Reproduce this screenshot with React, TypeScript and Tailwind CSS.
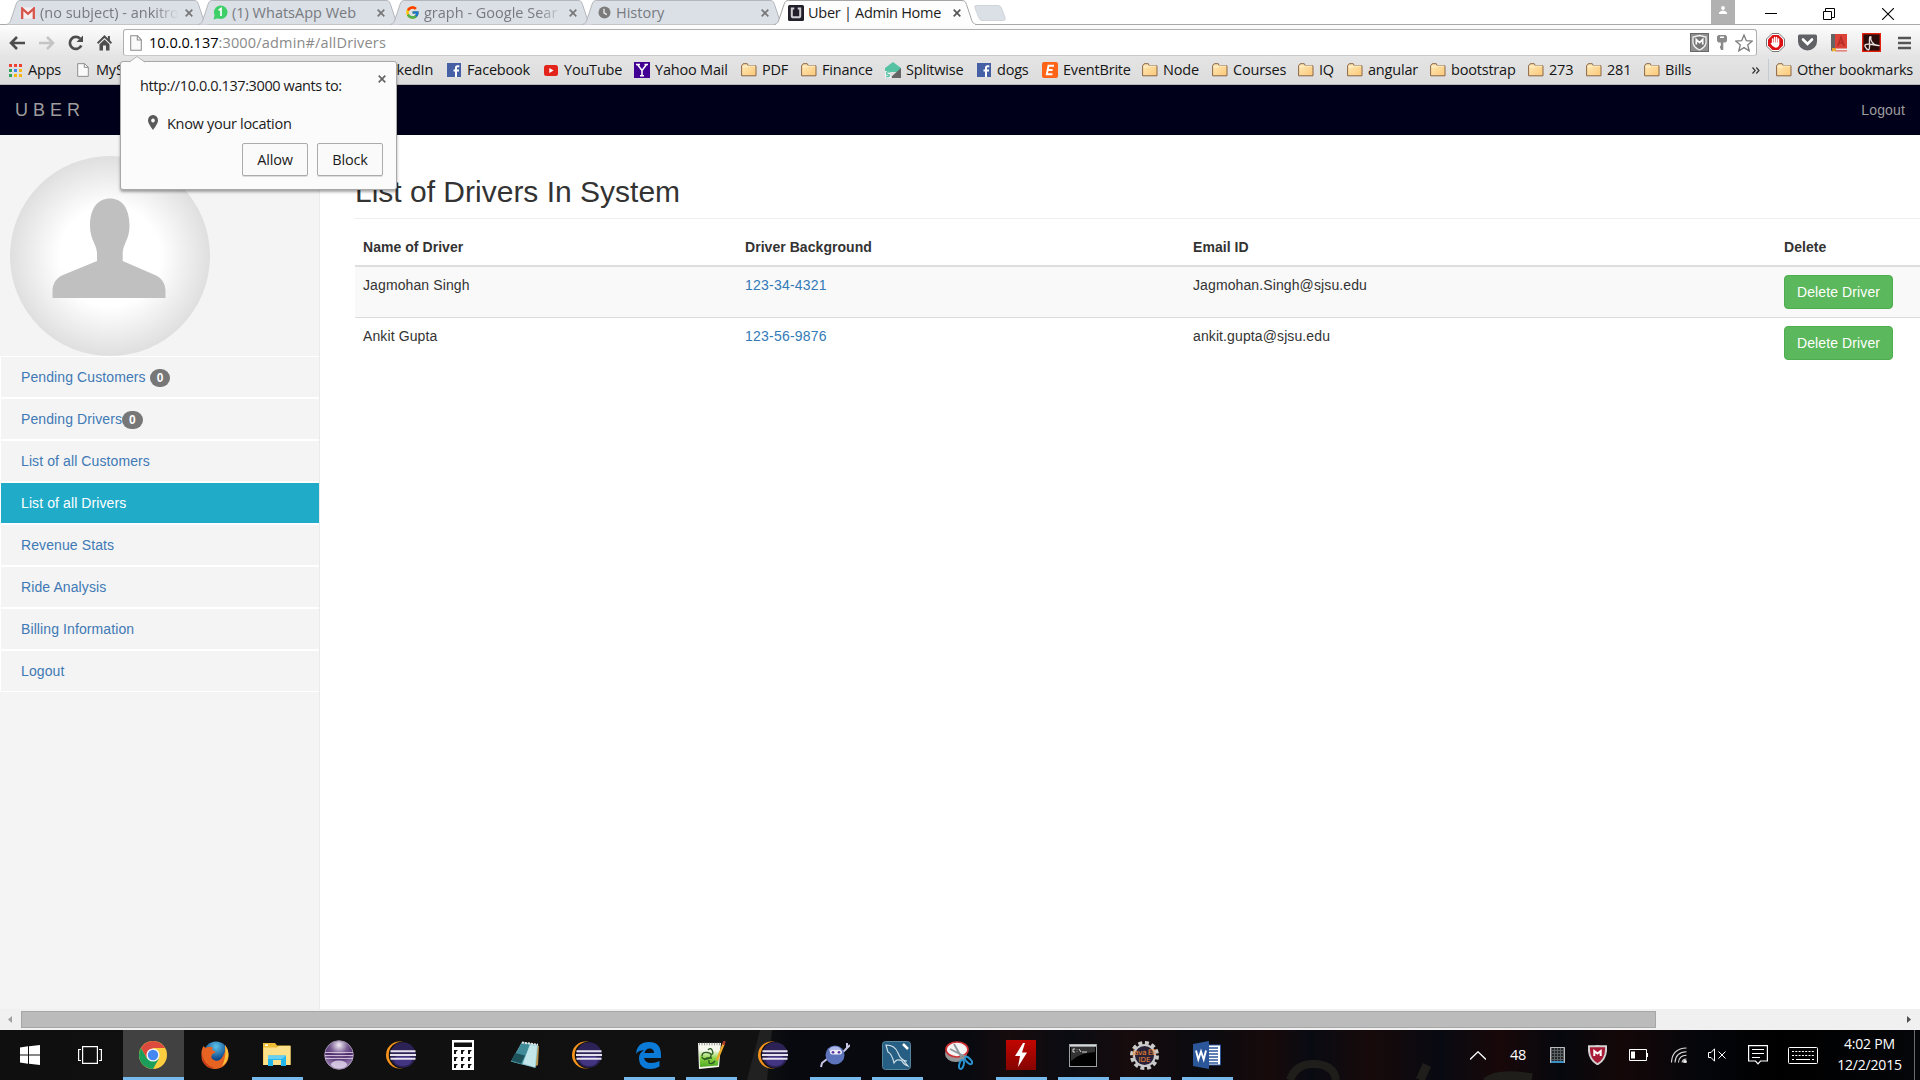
import type { ReactNode } from "react";
import { FcGoogle } from "react-icons/fc";

const CloseX = ({ color = "#6e6e6e" }: { color?: string }) => (
  <svg width="8" height="8" viewBox="0 0 8 8" stroke={color} strokeWidth="1.7"><path d="M.7.7 7.3 7.3M7.3.7.7 7.3" /></svg>
);

const GmailIcon = () => (
  <svg width="14" height="12" viewBox="0 0 14 12"><rect x="1" y="0.5" width="12" height="11" fill="#f3f0ef" /><path d="M1.2 12V1.6L7 6.8l5.8-5.2V12" fill="none" stroke="#d9544a" strokeWidth="2.3" /></svg>
);
const WhatsappIcon = () => (
  <svg width="15" height="15" viewBox="0 0 15 15"><circle cx="7.7" cy="7.2" r="6.8" fill="#3fcf67" /><path d="M.5 14.5 1.6 10l3.4 3.2z" fill="#3fcf67" /><path d="M5.6 5.2 8 3.6V11" fill="none" stroke="#fff" strokeWidth="1.7" /></svg>
);
const ClockIcon = () => (
  <svg width="13" height="13" viewBox="0 0 13 13"><circle cx="6.5" cy="6.5" r="6" fill="#7b7b7b" /><path d="M6 2.8v4l2.8 1.8" fill="none" stroke="#eee" strokeWidth="1.3" /></svg>
);
const UberIcon = () => (
  <svg width="16" height="16" viewBox="0 0 16 16"><rect width="16" height="16" rx="1.5" fill="#221f2b" /><path d="M6.3 3.6H3.8v7.1q0 1.6 1.6 1.6h5.2q1.6 0 1.6-1.6V3.6H9.700" fill="none" stroke="#cfcfd3" strokeWidth="2" /></svg>
);

function Tab({ icon, title, active, fade }: { icon: ReactNode; title: string; active?: boolean; fade?: boolean }) {
  return (
    <div className={`relative -mr-[10px] flex h-[25px] w-[202px] shrink-0 items-center ${active ? "z-10" : ""}`}>
      <svg className="absolute inset-0" width="203" height="25" viewBox="0 0 203 25">
        <path d="M0 24.500C4 24 4.500 21 5.500 18L10 4.500C11 1.500 12 .5 14.500 .5H188C190.500 .5 191.500 1.500 192.500 4.500L197 18C198 21 198.500 24 202.500 24.500" fill={active ? "#fdfdfd" : "#dbe0e7"} stroke={active ? "#a5a5a5" : "#b3b6ba"} />
        {active && <path d="M2 24.500H201" stroke="#fdfdfd" />}
      </svg>
      <div className="relative ml-[14px] flex w-4 justify-center">{icon}</div>
      <div className={`relative ml-1 w-[139px] overflow-hidden whitespace-nowrap text-[14.5px] leading-6 ${active ? "tracking-[-0.28px] text-[#1c1c1c]" : "text-[#777a7e]"} ${fade ? "[mask-image:linear-gradient(to_right,black_82%,transparent)]" : ""}`}>{title}</div>
      <div className="relative ml-[6px]"><CloseX color={active ? "#555" : "#777"} /></div>
    </div>
  );
}

const PageIcon = ({ h = 15 }: { h?: number }) => (
  <svg width="12" height={h} viewBox="0 0 12 15" preserveAspectRatio="none"><path d="M.7.7H7.500L11.300 4.500V14.300H.7z" fill="#fafafa" stroke="#8b8b8b" /><path d="M7.300.7V4.700H11.300" fill="none" stroke="#8b8b8b" /></svg>
);
const Folder = () => (
  <svg width="16" height="14" viewBox="0 0 16 14"><defs><linearGradient id="fold" x1="0" y1="0" x2="1" y2="1"><stop stopColor="#ffeab8" /><stop offset="1" stopColor="#fbc878" /></linearGradient></defs><path d="M.6 12.800V2.800Q.6 2 1.400 2H1.500L2.200.7H6.300L7.200 2.500H14.200Q15 2.500 15 3.300V12.800z" fill="url(#fold)" stroke="#8a6647" /><path d="M1.500 3.800H6.500L7.500 3H14" fill="none" stroke="#fff3d2" /></svg>
);
const FbIcon = () => (
  <svg width="14" height="14" viewBox="0 0 14 14"><rect width="14" height="14" fill="#4560a5" /><path d="M12.300 3.200H10.500Q9 3.200 9 5V14M6.500 7.400H12" fill="none" stroke="#fff" strokeWidth="2" /></svg>
);
const AppsIcon = () => (
  <div className="grid grid-cols-3 gap-[2px]">
    {["bg-[#ee4035]", "bg-[#ee4035]", "bg-[#ee4035]", "bg-[#2fa45b]", "bg-[#3c88f0]", "bg-[#f7b713]", "bg-[#2fa45b]", "bg-[#f7b713]", "bg-[#f7b713]"].map((c, i) => <i key={i} className={`size-[3px] ${c}`} />)}
  </div>
);
const YtIcon = () => (
  <svg width="14" height="11" viewBox="0 0 14 11"><rect width="14" height="11" rx="2.500" fill="#e3241b" /><path d="M5.300 3v5L9.600 5.500z" fill="#fff" /></svg>
);
const YahooIcon = () => (
  <svg width="16" height="16" viewBox="0 0 16 16"><rect width="16" height="16" fill="#410093" /><path d="M3.500 2.500 8 8.500 12.500 2.500M8 8V14M2 2.500H6M10.500 2.500H14M6 13.800H10" fill="none" stroke="#fff" strokeWidth="1.500" /></svg>
);
const SplitIcon = () => (
  <svg width="16" height="16" viewBox="0 0 16 16"><path d="M0 6 8 0 16 6V10H0z" fill="#56c2a4" /><path d="M16 6V16H5z" fill="#656565" /><path d="M0 9H4L7 16H0z" fill="#f3f3f3" /><path d="M5 10.200Q1.500 9 1.500 11T4.500 13Q5 15 1 14.500" fill="none" stroke="#56c2a4" strokeWidth="1.300" /></svg>
);
const EventIcon = () => (
  <svg width="16" height="16" viewBox="0 0 16 16"><rect width="16" height="16" rx="2" fill="#ff6315" /><path d="M12 3.800H6.500L4.800 12.200H10.500M5.700 8H10.600" fill="none" stroke="#fff" strokeWidth="1.900" /></svg>
);

const bookmarks: { w: string; icon: ReactNode; label: string }[] = [
  { w: "w-[68px]", icon: <AppsIcon />, label: "Apps" },
  { w: "w-[281px]", icon: <PageIcon h={14} />, label: "MySJSU" },
  { w: "w-[90px]", icon: null, label: "LinkedIn" },
  { w: "w-[97px]", icon: <FbIcon />, label: "Facebook" },
  { w: "w-[91px]", icon: <YtIcon />, label: "YouTube" },
  { w: "w-[107px]", icon: <YahooIcon />, label: "Yahoo Mail" },
  { w: "w-[60px]", icon: <Folder />, label: "PDF" },
  { w: "w-[84px]", icon: <Folder />, label: "Finance" },
  { w: "w-[91px]", icon: <SplitIcon />, label: "Splitwise" },
  { w: "w-[66px]", icon: <FbIcon />, label: "dogs" },
  { w: "w-[100px]", icon: <EventIcon />, label: "EventBrite" },
  { w: "w-[70px]", icon: <Folder />, label: "Node" },
  { w: "w-[86px]", icon: <Folder />, label: "Courses" },
  { w: "w-[49px]", icon: <Folder />, label: "IQ" },
  { w: "w-[83px]", icon: <Folder />, label: "angular" },
  { w: "w-[98px]", icon: <Folder />, label: "bootstrap" },
  { w: "w-[58px]", icon: <Folder />, label: "273" },
  { w: "w-[58px]", icon: <Folder />, label: "281" },
  { w: "w-[108px]", icon: <Folder />, label: "Bills" },
];

function Bookmark({ w, icon, label }: { w: string; icon: ReactNode; label: string }) {
  return (
    <div className={`flex shrink-0 items-center whitespace-nowrap ${w}`}>
      <span className="mr-[5px] flex w-4 justify-center">{icon}</span>
      <span>{label}</span>
    </div>
  );
}

function TabStrip() {
  return (
    <div className="flex h-[25px] bg-white pl-[6px] shadow-[inset_0_-1px_0_#a9a9a9]">
      <Tab icon={<GmailIcon />} title="(no subject) - ankitro" fade />
      <Tab icon={<WhatsappIcon />} title="(1) WhatsApp Web" />
      <Tab icon={<FcGoogle size={15} />} title="graph - Google Sear" fade />
      <Tab icon={<ClockIcon />} title="History" />
      <Tab icon={<UberIcon />} title="Uber | Admin Home" active />
      <svg className="mt-[5px] ml-[8px]" width="32" height="16" viewBox="0 0 32 16"><path d="M2 .5H24Q26.500 .5 27.500 3L31 12.500Q32 15.500 29.500 15.500H8Q6 15.500 5 13L.8 2.500Q.3 .5 2 .5z" fill="#dbe0e7" stroke="#cfd4da" /></svg>
      <div className="ml-auto flex h-6">
        <div className="flex w-6 justify-center bg-[#b1b1b1] pt-[6px]">
          <svg width="8" height="8" viewBox="0 0 8 8" fill="#fff"><circle cx="4" cy="2" r="1.900" /><path d="M0 8V6.500Q2 4.500 4 4.500T8 6.500V8z" /></svg>
        </div>
        <svg className="mt-[7px] ml-[30px]" width="12" height="13" viewBox="0 0 12 13"><path d="M0 6.500H12" stroke="#000" /></svg>
        <svg className="mt-2 ml-[46px]" width="12" height="12" viewBox="0 0 12 12" fill="none" stroke="#000"><path d="M.5 3.500H8.500V11.500H.5zM2.500 3.500V.5H11.500V9.500H8.500" /></svg>
        <svg className="mt-2 mr-[26px] ml-[47px]" width="12" height="12" viewBox="0 0 12 12" stroke="#000" strokeWidth="1.100"><path d="M0 0 12 12M12 0 0 12" /></svg>
      </div>
    </div>
  );
}

function Toolbar() {
  return (
    <div className="flex h-8 items-center pt-[3px] pl-[9px]">
      <svg width="16" height="14" viewBox="0 0 16 14" fill="none" stroke="#4d4d4d" strokeWidth="2.600"><path d="M8 1 2 7l6 6M2.500 7H16" /></svg>
      <svg className="ml-[14px]" width="16" height="14" viewBox="0 0 16 14" fill="none" stroke="#c4c4c4" strokeWidth="2.600"><path d="M8 1l6 6-6 6M13.500 7H0" /></svg>
      <svg className="ml-[13px]" width="16" height="16" viewBox="0 0 16 16"><path d="M13.300 10.500A6 6 0 1 1 12 3.600" fill="none" stroke="#4d4d4d" strokeWidth="2.700" /><path d="M15 .5V7H8.500z" fill="#4d4d4d" /></svg>
      <svg className="ml-[13px]" width="15" height="16" viewBox="0 0 15 16" fill="#4d4d4d"><path d="M7.500 0 0 7.500 1.200 8.900 7.500 2.900 13.800 8.900 15 7.500 12.900 5.300V1H10.900V3.400z" /><path d="M7.500 4.500 2.500 9.200V15.500H6V10.500H9V15.500H12.500V9.200z" /></svg>
      <div className="ml-[11px] flex h-[27px] w-[1634px] items-center rounded-[3px] border border-[#b0b0b0] border-b-[#c9c9c9] bg-white pl-[6px]">
        <PageIcon h={16} />
        <div className="ml-[7px] text-[14.5px] leading-6 tracking-[0.17px] whitespace-nowrap text-[#8a8a8a]"><span className="tracking-normal text-black">10.0.0.137</span>:3000/admin#/allDrivers</div>
        <svg className="ml-auto" width="19" height="19" viewBox="0 0 19 19"><rect x=".5" y=".5" width="18" height="18" fill="#8f8f8f" stroke="#686868" /><path d="M9.500 2.500 16 4V10Q15 14.500 9.500 17 4 14.500 3 10V4z" fill="#777" stroke="#f1f1f1" strokeWidth="1.300" /><path d="M6.300 11.500V6.500L9.500 9.500 12.700 6.500V11.500" fill="none" stroke="#fff" strokeWidth="1.700" /></svg>
        <svg className="ml-2" width="10" height="15" viewBox="0 0 10 15" fill="#8a8a8a"><path d="M1.500 0H8.500L10 1.500V6L8.500 7.500H6.300V15H3.800V13.500H3V11H3.800V7.500H1.500L0 6V1.500zM3 1.500V3H7V1.500z" fillRule="evenodd" /></svg>
        <svg className="mr-[3px] ml-[8px]" width="18" height="18" viewBox="0 0 18 18"><path d="M9 1 11.300 6.700 17.300 7.100 12.700 11 14.200 16.800 9 13.600 3.800 16.800 5.300 11 .7 7.100 6.700 6.700z" fill="#fff" stroke="#7c7c7c" strokeWidth="1.300" /></svg>
      </div>
      <svg className="ml-[9px]" width="19" height="19" viewBox="0 0 19 19"><path d="M6 .5H13L18.500 6V13L13 18.500H6L.5 13V6z" fill="#fff" stroke="#777" /><path d="M6.500 2H12.500L17 6.500V12.500L12.500 17H6.500L2 12.500V6.500z" fill="#dc1116" /><path d="M6.600 6V10M8.600 4.500V10M10.600 4.500V10M12.500 6V11" stroke="#fff" strokeWidth="1.500" strokeLinecap="round" /><path d="M5.900 9.500H13.200V11.500Q12.500 14.800 9.500 14.800 6.500 14 4.500 10.500L5.500 10z" fill="#fff" /></svg>
      <svg className="ml-[13px]" width="19" height="17" viewBox="0 0 19 17"><path d="M1.500.5H17.500Q19 .5 19 2V7.500A9.500 9 0 0 1 0 7.500V2Q0 .5 1.500.5z" fill="#606266" /><path d="M5 5.500 9.500 10 14 5.500" fill="none" stroke="#fff" strokeWidth="2.600" strokeLinecap="round" /></svg>
      <svg className="ml-[14px]" width="16" height="18" viewBox="0 0 16 18"><path d="M0 0H4V15L0 17z" fill="#646464" /><path d="M4 0H16V14.500H4z" fill="#dc4238" /><path d="M6.800 12 10 3.500 13.200 12M8 9H12" fill="none" stroke="#b62d25" strokeWidth="1.700" /><path d="M4 15.500H16V17.500H4z" fill="#f3f3f3" /><path d="M5 16.900H16" stroke="#dc4238" /><path d="M1 14H5V18L3 16.500 1 18z" fill="#e8a72b" /></svg>
      <svg className="ml-[15px]" width="19" height="19" viewBox="0 0 19 19"><rect x=".7" y=".7" width="17.600" height="17.600" fill="#2c0b0b" stroke="#e3200d" strokeWidth="1.400" /><path d="M9 4Q8 6 10 9T16 12.500 10 11.500 4 15 7.500 11 9 4z" fill="none" stroke="#e5dcdc" strokeWidth="1.300" /></svg>
      <svg className="ml-[17px]" width="13" height="14" viewBox="0 0 13 14" stroke="#555" strokeWidth="2.500"><path d="M0 2H13M0 7H13M0 12H13" /></svg>
    </div>
  );
}

function PermissionPopup() {
  return (
    <div className="absolute top-[61px] left-[120px] z-30 h-[129px] w-[277px] rounded-[3px] border border-[#a8a8a8] bg-[#fbfbfb] font-['Open_Sans',sans-serif] text-[14.5px] text-[#1a1a1a] shadow-[0_2px_3px_rgba(0,0,0,0.35)]">
      <svg className="absolute -top-[6px] left-[8px]" width="16" height="7" viewBox="0 0 16 7"><path d="M0 6.500 8 0 16 6.500V7H0z" fill="#fbfbfb" /><path d="M0 6.200 8 .5 16 6.200" fill="none" stroke="#b1b1b1" /></svg>
      <div className="flex h-[37px] items-end justify-between pr-[10px] pl-[19px]">
        <span className="h-6 leading-[22px] tracking-[-0.4px] whitespace-nowrap">http://10.0.0.137:3000 wants to:</span>
        <span className="mb-4"><CloseX color="#666" /></span>
      </div>
      <div className="mt-[13px] flex h-6 items-center pl-[27px]">
        <svg className="-mt-1" width="10" height="15" viewBox="0 0 11 15" preserveAspectRatio="none"><path d="M5.500 0A5.400 5.400 0 0 1 11 5.500Q11 8.500 5.500 15 0 8.500 0 5.500A5.400 5.400 0 0 1 5.500 0zM5.500 3.500A2 2 0 1 0 5.510 3.500z" fill="#5a5a5a" fillRule="evenodd" /></svg>
        <span className="ml-[9px] tracking-[-0.3px]">Know your location</span>
      </div>
      <div className="mt-[7px] flex justify-end gap-[9px] pr-[13px] leading-[31px] tracking-[-0.2px]">
        <div className="h-[33px] w-[66px] rounded-[2px] border border-[#ababab] bg-[#fafafa] text-center shadow-[0_1px_0_rgba(0,0,0,0.12)]">Allow</div>
        <div className="h-[33px] w-[66px] rounded-[2px] border border-[#ababab] bg-[#fafafa] text-center shadow-[0_1px_0_rgba(0,0,0,0.12)]">Block</div>
      </div>
    </div>
  );
}

const menu: { label: string; badge?: string; gap?: boolean; active?: boolean }[] = [
  { label: "Pending Customers", badge: "0", gap: true },
  { label: "Pending Drivers", badge: "0" },
  { label: "List of all Customers" },
  { label: "List of all Drivers", active: true },
  { label: "Revenue Stats" },
  { label: "Ride Analysis" },
  { label: "Billing Information" },
  { label: "Logout" },
];

function Sidebar() {
  return (
    <aside className="w-[320px] shrink-0 border-r border-[#eaeaea] bg-[#f4f4f4] pt-[21px]">
      <svg className="ml-[10px] block" width="200" height="200" viewBox="0 0 200 200">
        <defs><radialGradient id="halo"><stop offset=".5" stopColor="#fff" /><stop offset=".78" stopColor="#ededed" /><stop offset="1" stopColor="#dfdfdf" /></radialGradient></defs>
        <circle cx="100" cy="100" r="100" fill="url(#halo)" />
        <path d="M100 42.500C112 42.500 119.500 52 119.500 70C119.500 83 113 88 112.700 97V105L145 119C152 122 155.500 128 155.500 135V142H42.500V135C42.500 128 46 122 53 119L87 105V97C86.500 88 80 83 80 70C80 52 88 42.500 100 42.500z" fill="#c0c0c0" />
      </svg>
      <nav className="border-l border-white tracking-[0.1px]">
        {menu.map((m) => (
          <div key={m.label} className={`flex h-[42px] items-center border-y border-white pl-5 ${m.active ? "bg-[#20acc9] text-white" : "text-[#4079b5]"}`}>
            {m.label}
            {m.badge && <span className={`mt-px rounded-[10px] bg-[#777] px-[7px] py-[3px] text-xs leading-3 font-bold text-white ${m.gap ? "ml-[4px]" : ""}`}>{m.badge}</span>}
          </div>
        ))}
      </nav>
    </aside>
  );
}

const drivers = [
  { name: "Jagmohan Singh", ssn: "123-34-4321", email: "Jagmohan.Singh@sjsu.edu", row: "bg-[#f9f9f9] h-[50px]" },
  { name: "Ankit Gupta", ssn: "123-56-9876", email: "ankit.gupta@sjsu.edu", row: "h-[51px] border-t border-[#ddd]" },
];

function Drivers() {
  const cols = "grid grid-cols-[382px_448px_591px_1fr] px-2 pt-2";
  return (
    <main className="min-w-0 grow bg-white pt-[39px] pl-[35px]">
      <h2 className="mb-[10px] h-[45px] border-b border-[#eee] text-[30px] leading-[35px]">List of Drivers In System</h2>
      <div className={`${cols} h-[38px] border-b-2 border-[#ddd] font-bold tracking-[0.05px]`}>
        <span>Name of Driver</span><span>Driver Background</span><span>Email ID</span><span>Delete</span>
      </div>
      {drivers.map((d) => (
        <div key={d.name} className={`${cols} ${d.row} tracking-[0.11px]`}>
          <span>{d.name}</span>
          <span className="tracking-[0.22px] text-[#337ab7]">{d.ssn}</span>
          <span>{d.email}</span>
          <button className="h-[34px] w-[109px] rounded border border-[#4cae4c] bg-[#5cb85c] text-white">Delete Driver</button>
        </div>
      ))}
    </main>
  );
}

const Eclipse = ({ luna }: { luna?: boolean }) => luna ? (
  <svg width="30" height="30" viewBox="0 0 30 30"><defs><radialGradient id="orb" cx=".5" cy=".15" r=".9"><stop stopColor="#f3eef6" /><stop offset=".35" stopColor="#75598f" /><stop offset=".55" stopColor="#5a3a78" /><stop offset="1" stopColor="#b59fca" /></radialGradient></defs><circle cx="15" cy="15" r="14.300" fill="url(#orb)" stroke="#9b8ca8" /><path d="M1.500 11.500Q15 17 28.500 11.500V15H1.500z" fill="#4a2765" opacity=".7" /><path d="M1 12.500H29M1 15.500H29M1 18.500H29" stroke="#d7c9e2" strokeWidth=".9" /><ellipse cx="15" cy="24.500" rx="8" ry="4" fill="#e4d8ef" opacity=".8" /></svg>
) : (
  <svg width="30" height="28" viewBox="0 0 30 28"><circle cx="13.500" cy="14" r="13.500" fill="#f7941e" /><circle cx="16" cy="14" r="13.300" fill="#111" /><circle cx="17" cy="14" r="12.800" fill="#2c2255" /><ellipse cx="17" cy="19" rx="9" ry="6" fill="#443583" /><path d="M4.500 10.300H29.500M4 14H30M4.500 17.700H29.500" stroke="#e6e3ef" strokeWidth="2.100" /></svg>
);

const apps: { icon: ReactNode; on?: boolean; chrome?: boolean }[] = [
  { chrome: true, icon: <svg width="28" height="28" viewBox="0 0 28 28"><circle cx="14" cy="14" r="14" fill="#fccd3f" /><path d="M1.900 7A14 14 0 0 1 26.100 7H14L8 17.500z" fill="#dd4b3e" /><path d="M1.900 7A14 14 0 0 0 14 28L20 17.500H8z" fill="#1b9e5a" /><circle cx="14" cy="14" r="6.600" fill="#f4f4f4" /><circle cx="14" cy="14" r="5.200" fill="#4688f1" /></svg> },
  { icon: <svg width="28" height="28" viewBox="0 0 28 28"><defs><radialGradient id="globe" cx=".5" cy=".2"><stop stopColor="#5cc3ea" /><stop offset="1" stopColor="#114a8c" /></radialGradient></defs><circle cx="15" cy="13" r="12.500" fill="url(#globe)" /><path d="M24 4Q28 9 27.500 15A13.500 13 0 0 1 .5 15Q0 9 2.500 5L4.500 7Q8 5 12 6.500L11 9 15 11 11 13.500Q9 18 14 19.500T22 15Q25 10 24 4z" fill="#e66321" /><path d="M24 4Q28.500 10 27 17 25 23 21 25 25.500 17 24 4z" fill="#f9c13a" /><path d="M1 13Q3 24 13 27 6 28 1.500 20z" fill="#c83a19" /></svg> },
  { on: true, icon: <svg width="28" height="24" viewBox="0 0 28 24"><path d="M0 0H12L14 2.500H27.500V22H0z" fill="#efbd35" /><path d="M.5 4.500H14L16 3H27.500V22H.5z" fill="#fde08a" /><path d="M2 1.500H5V3H2z" fill="#fff" /><path d="M5 23V12.500H23V23H18V17H10V23z" fill="#21b7ec" /><path d="M5 12.500H23L19 16H5z" fill="#69cff3" /></svg> },
  { icon: <Eclipse luna /> },
  { icon: <Eclipse /> },
  { icon: <svg width="22" height="30" viewBox="0 0 22 30"><path d="M0 0H22V30H0z" fill="#fff" /><path d="M2 2.500H20V7H2z" fill="#111" /><g fill="#111">{[10, 17, 24].map((y) => [2, 9, 16].map((x) => <path key={`${x}-${y}`} d={`M${x} ${y}H${x + 4}L${x + 2} ${y + 2}V${y + 4}H${x}z`} />))}</g></svg> },
  { icon: <svg width="30" height="28" viewBox="0 0 30 28"><path d="M26 4 29 5 28 24 24 26z" fill="#b9924d" /><path d="M12 1 28 3.500 25.500 27 1 20.500z" fill="#8ecbd3" /><path d="M12 1.500 20 3 12 23.500 1 20.500z" fill="#3f8b98" /><path d="M20 4 27 5 25 26 13 22.500z" fill="#d3eff0" opacity=".75" /><path d="M1.500 19.500 5 12 15 14.500 11 22.500z" fill="#1d525b" /><path d="M12 1.500 28 3.700" stroke="#e4e4e4" strokeWidth="2" strokeDasharray="2 1" /></svg> },
  { icon: <Eclipse /> },
  { on: true, icon: <svg width="26" height="27" viewBox="0 0 26 27"><path d="M0 12Q1 0 13 0 25 0 25 13V16H8Q9 21 15 21 20 21 23.500 19V24.500Q19 27 14 27 3 26.500 3 16 3 11 8 8 2 8.500 0 12zM8.500 11H18Q18 6.500 13.500 6.500 9.500 6.500 8.500 11z" fill="#0b7bd7" fillRule="evenodd" /></svg> },
  { on: true, icon: <svg width="30" height="28" viewBox="0 0 30 28"><defs><linearGradient id="grass" x1="0" y1="0" x2="0" y2="1"><stop offset=".25" stopColor="#f6f8ee" /><stop offset=".6" stopColor="#8ed445" /><stop offset="1" stopColor="#4ca922" /></linearGradient></defs><path d="M2 2H25L23 26 3 28z" fill="#f6f8ee" /><path d="M3 4H24L22 24.500 4 26z" fill="url(#grass)" /><path d="M3 3H24" stroke="#999" strokeWidth="2.500" strokeDasharray="1 1.500" /><path d="M6 15Q6 11 11 11.500T15 15 10 18 6 15.500M12 9Q15 6 16.500 10T14 13M8 19Q11 16 16 17M13 19V22Q16 24 19 20" fill="none" stroke="#2c5a22" strokeWidth="1.300" /><path d="M28 2 21 19" stroke="#edaa28" strokeWidth="2.300" /><path d="M28.500 0 27.500 4" stroke="#b33c32" strokeWidth="2.300" /></svg> },
  { icon: <Eclipse /> },
  { on: true, icon: <svg width="30" height="26" viewBox="0 0 30 26"><path d="M7 17 2 21 1 25M22 11 27 6V1M27 6 30 3" stroke="#c5c6e4" strokeWidth="2" fill="none" /><circle cx="15" cy="13" r="9.500" fill="#5d74bc" /><ellipse cx="15" cy="8" rx="6" ry="3.500" fill="#aeb9e6" /><rect x="10" y="8" width="12" height="4.500" rx="2.200" fill="#f0f0fa" /><circle cx="13" cy="10.300" r="1.400" fill="#593aa5" /><circle cx="19" cy="10.300" r="1.400" fill="#593aa5" /></svg> },
  { on: true, icon: <svg width="29" height="29" viewBox="0 0 29 29"><rect x=".5" y=".5" width="28" height="28" rx="3" fill="#265f83" stroke="#56859f" /><path d="M4 4Q13 4 16 12T25 20L22 20 26 25Q21 23 20 20 15 17 12 22 10 13 6 11 5 8 4 4z" fill="none" stroke="#d2e2eb" strokeWidth="1.100" /><path d="M21 3 26 8" stroke="#fff" strokeWidth="2.500" /></svg> },
  { icon: <svg width="28" height="29" viewBox="0 0 28 29"><ellipse cx="11" cy="13" rx="11" ry="8" fill="#959595" /><ellipse cx="12" cy="8.500" rx="11" ry="7.500" fill="#f5f3f3" stroke="#cf3035" strokeWidth="1.700" /><path d="M9 3 18 19M5 8 21 16" stroke="#8d979b" strokeWidth="1.800" /><ellipse cx="16.500" cy="23.500" rx="2.200" ry="4.500" fill="none" stroke="#2b92d0" strokeWidth="2" transform="rotate(15 16.500 23.500)" /><ellipse cx="23.500" cy="19.500" rx="2.200" ry="4.500" fill="none" stroke="#2b92d0" strokeWidth="2" transform="rotate(-45 23.500 19.500)" /></svg> },
  { on: true, icon: <svg width="30" height="30" viewBox="0 0 30 30"><defs><linearGradient id="red" x1="0" y1="0" x2="0" y2="1"><stop stopColor="#c20500" /><stop offset="1" stopColor="#850500" /></linearGradient></defs><rect width="30" height="30" fill="url(#red)" /><path d="M17 3 9 16H14L12 27 21 12.500H16L19 3z" fill="#fff" /></svg> },
  { on: true, icon: <svg width="28" height="23" viewBox="0 0 28 23"><rect x=".5" y=".5" width="27" height="22" fill="#000" stroke="#9ba0a3" /><path d="M1 1.700H27" stroke="#d6dadd" strokeWidth="2" /><path d="M2 3H26V8Q10 9 2 17z" fill="#333" /><path d="M6 5H4V8H6M8 5.500V6M8 7.500V8M10 5 12 8M13 8H18" stroke="#d8d8d8" fill="none" /></svg> },
  { on: true, icon: <svg width="29" height="29" viewBox="0 0 29 29"><circle cx="14.500" cy="14.500" r="12.500" fill="none" stroke="#cacaca" strokeWidth="4" strokeDasharray="3.900 2.650" /><circle cx="14.500" cy="14.500" r="10.500" fill="#282137" stroke="#c9c9c9" strokeWidth="2" /><text x="14.500" y="14" textAnchor="middle" fill="#ed8734" fontSize="7.500" fontFamily="DejaVu Sans" textLength="24">Java EE</text><text x="14.500" y="20.500" textAnchor="middle" fill="#ed8734" fontSize="7" fontFamily="DejaVu Sans">IDE</text></svg> },
  { on: true, icon: <svg width="28" height="28" viewBox="0 0 28 28"><path d="M13 4H27.500V24H13z" fill="#fff" stroke="#2b579a" /><path d="M16 7H25M16 10H25M16 13H25M16 16H25M16 19H25M16 22H25" stroke="#2b579a" strokeWidth="1.400" /><path d="M0 3 16 0V28L0 25z" fill="#2b579a" /><path d="M3 9.500 5.300 18.500 8 10.500 10.700 18.500 13 9.500" fill="none" stroke="#fff" strokeWidth="1.900" /></svg> },
];

const tray: { w: string; icon: ReactNode }[] = [
  { w: "w-[40px]", icon: <svg width="16" height="9" viewBox="0 0 16 9" fill="none" stroke="#fff" strokeWidth="1.300"><path d="M0 8.500 8 .8 16 8.500" /></svg> },
  { w: "w-[40px]", icon: <span className="text-[14.5px] tracking-[-0.4px]">48</span> },
  { w: "w-[39px]", icon: <svg width="15" height="16" viewBox="0 0 15 16"><rect width="15" height="16" fill="#5d6164" /><path d="M3 1V14M6 1V14M9 1V14M12 1V14" stroke="#15171a" strokeWidth="1.600" strokeDasharray="2 1" /><path d="M.5 16V.5H14.500V16" fill="none" stroke="#bbb" /><path d="M1 15H14" stroke="#2f9fe8" strokeWidth="1.500" /></svg> },
  { w: "w-[40px]", icon: <svg width="19" height="20" viewBox="0 0 19 20"><path d="M9.500 1Q14 1.500 18 1.300 19 14 9.500 19.300 0 14 1 1.300 5 1.500 9.500 1z" fill="#a81c38" stroke="#d2d2d2" strokeWidth="2" /><path d="M6.300 11V6L9.500 8.500 12.700 6V11" fill="none" stroke="#fff" strokeWidth="2" /></svg> },
  { w: "w-[42px]", icon: <svg width="19" height="12" viewBox="0 0 19 12"><path d="M.5 .5H17.500V11.500H.5z" fill="none" stroke="#fff" /><path d="M18.500 4V8" stroke="#fff" /><path d="M2 2.500H6V9.500H2z" fill="#fff" /></svg> },
  { w: "w-[40px]", icon: <svg width="16" height="16" viewBox="0 0 16 16" fill="none" stroke="#ddd" strokeWidth="1.100"><path d="M.5 15.500Q1 1.500 15.500 1M4 15.500Q4.500 5 15.500 4.700M7.500 15.500Q8 8.500 15.500 8.300M11 15.500Q11.500 12 15.500 12" /><circle cx="14" cy="14.500" r="1.300" fill="#fff" /></svg> },
  { w: "w-[36px]", icon: <svg width="18" height="14" viewBox="0 0 18 14" fill="none" stroke="#fff"><path d="M.5 4.500H3L6.500 .8V13.200L3 9.500H.5zM10.500 3.500 17.500 10.500M17.500 3.500 10.500 10.500" /></svg> },
  { w: "w-[45px]", icon: <svg width="20" height="20" viewBox="0 0 20 20" fill="none" stroke="#fff" strokeWidth="1.200"><path d="M.6 .6H19.400V16H12.500L10 18.800 7.500 16H.6zM4 4.500H16M4 8.500H16M4 12.500H12" /></svg> },
  { w: "w-[46px]", icon: <svg width="30" height="17" viewBox="0 0 30 17" fill="none" stroke="#fff"><rect x=".5" y=".5" width="29" height="16" rx="1" /><path d="M4 4.500H26M4 8.500H26" strokeDasharray="2 1.300" /><path d="M4 12.500H6M8 12.500H22M24 12.500H26" /></svg> },
];

function Taskbar() {
  return (
    <footer className="relative flex h-[50px] bg-[linear-gradient(to_right,#0f0f0f_0px,#111_760px,#07090f_790px,#080a10_970px,#160b0d_1010px,#0a0c12_1070px,#170b0d_1130px,#0a0b10_1200px,#170a0b_1270px,#090b12_1310px,#170a0b_1370px,#080a11_1440px,#180809_1500px,#06080e_1560px,#140708_1620px,#05060b_1700px,#000_1780px,#050609_1920px)] font-['Open_Sans',sans-serif] text-white">
      <svg className="absolute top-0 left-[1270px]" width="280" height="50" viewBox="0 0 280 50" fill="none" stroke="#201e1a"><path d="M20 50Q26 33 45 34T66 50" strokeWidth="8" /><path d="M157 35 150 50M216 52Q228 42 262 48" strokeWidth="9" /></svg>
      <svg className="absolute top-0 left-[740px]" width="40" height="50" viewBox="0 0 40 50"><path d="M20 0H32L27 50H7z" fill="#262626" opacity=".8" /></svg>
      <div className="relative flex w-[60px] items-center justify-center"><svg width="20" height="20" viewBox="0 0 20 20" fill="#fff"><path d="M0 2.500 8 1.300V9.500H0zM9 1.200 20 0V9.500H9zM0 10.500H8V18.700L0 17.500zM9 10.500H20V20L9 18.800z" /></svg></div>
      <div className="relative flex w-[60px] items-center justify-center"><svg width="24" height="18" viewBox="0 0 24 18" fill="none" stroke="#fff" strokeWidth="1.200"><path d="M4.600 .6H19.400V17.400H4.600zM3 3.500H.6V14.500H3M21 3.500H23.400V14.500H21" /></svg></div>
      <div className="relative ml-[3px] flex gap-px">
        {apps.map((a, i) => (
          <div key={i} className={`flex w-[61px] flex-col items-center ${a.chrome ? "bg-[#414141]" : ""}`}>
            <div className="flex h-[47px] items-center pt-[3px] pr-[2px]">{a.icon}</div>
            {(a.on || a.chrome) && <div className={`h-[3px] bg-[#76b9ed] ${a.chrome ? "w-full" : "w-[51px]"}`} />}
          </div>
        ))}
      </div>
      <div className="relative ml-auto flex items-center">
        {tray.map((t, i) => <div key={i} className={`flex justify-center ${t.w}`}>{t.icon}</div>)}
        <div className="-mt-[3px] w-[88px] pr-px text-center text-[14px] leading-[21px] tracking-[-0.2px]">
          <div>4:02 PM</div>
          <div>12/2/2015</div>
        </div>
        <div className="mr-[5px] h-[50px] w-px bg-[#6b6b6b]" />
      </div>
    </footer>
  );
}

export default function App() {
  return (
    <div className="relative flex h-[1080px] w-[1920px] flex-col overflow-hidden bg-white font-['Liberation_Sans',Arial,sans-serif] text-sm leading-5 text-[#333]">
      <header className="font-['Open_Sans',sans-serif]">
        <TabStrip />
        <div className="h-[60px] border-b border-[#b5b5b5] bg-[linear-gradient(#fdfdfd,#e4e4e4_32px,#dcdcdc)]">
          <Toolbar />
          <div className="flex h-[26px] items-center pl-[7px] text-[14.5px] leading-5 tracking-[-0.2px] text-[#151515]">
            {bookmarks.map((b) => <Bookmark key={b.label} {...b} />)}
            <svg width="8" height="7" viewBox="0 0 8 7" fill="none" stroke="#333" strokeWidth="1.200"><path d="M.5 .5 3.200 3.500 .5 6.500M4.300 .5 7 3.500 4.300 6.500" /></svg>
            <div className="mr-[7px] ml-[8px] h-[22px] w-px bg-[#c5cbd2]" />
            <Bookmark w="w-[144px]" icon={<Folder />} label="Other bookmarks" />
          </div>
        </div>
      </header>
      <PermissionPopup />
      <div className="flex h-[50px] shrink-0 items-center justify-between bg-[#00001a] pr-[15px] pl-[15px] text-[#9d9d9d]">
        <span className="text-[18px] tracking-[5px]">UBER</span>
        <span className="tracking-[0.15px]">Logout</span>
      </div>
      <div className="flex min-h-0 grow">
        <Sidebar />
        <Drivers />
      </div>
      <div className="flex h-[21px] shrink-0 items-center justify-between bg-[#f0f0f0] pr-[9px] pl-[8px]">
        <svg width="4" height="7" viewBox="0 0 4 7"><path d="M4 0V7L0 3.500z" fill="#a0a0a0" /></svg>
        <div className="mr-auto ml-[9px] h-[17px] w-[1635px] border border-[#a6a6a6] bg-[#bbb]" />
        <svg width="4" height="7" viewBox="0 0 4 7"><path d="M0 0V7L4 3.500z" fill="#505050" /></svg>
      </div>
      <Taskbar />
    </div>
  );
}
